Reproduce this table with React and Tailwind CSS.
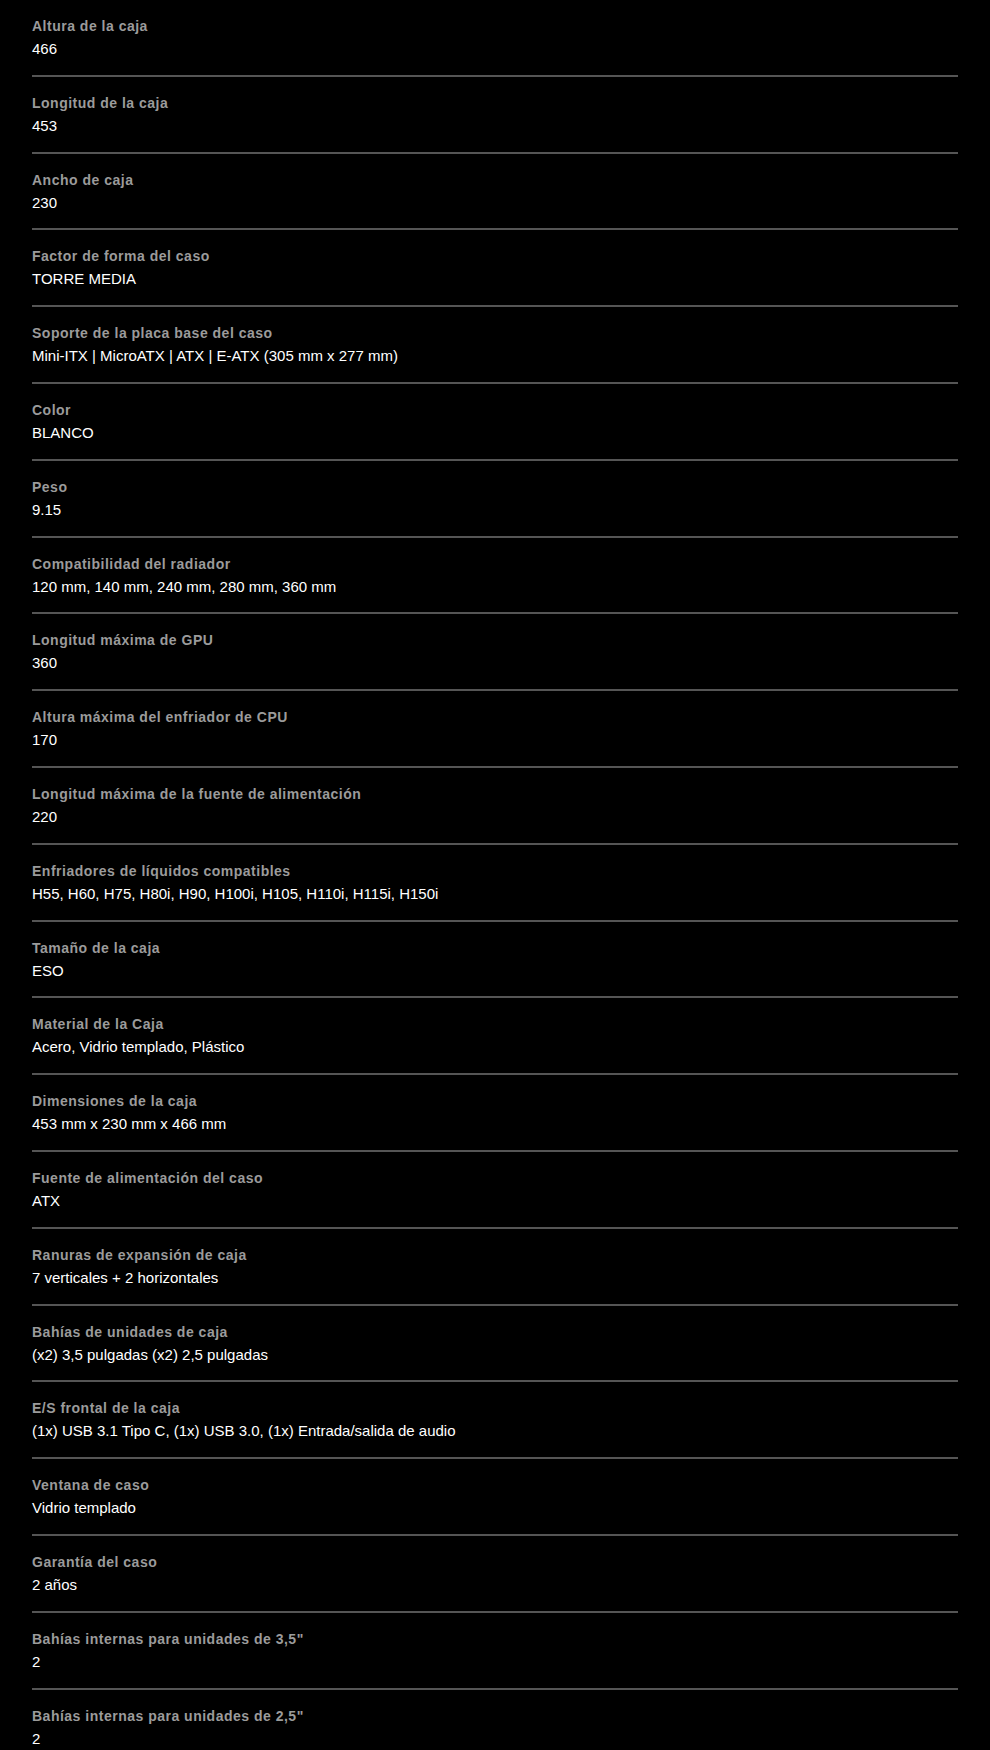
import React from 'react';

const specs = [
  ['Altura de la caja', '466'],
  ['Longitud de la caja', '453'],
  ['Ancho de caja', '230'],
  ['Factor de forma del caso', 'TORRE MEDIA'],
  ['Soporte de la placa base del caso', 'Mini-ITX | MicroATX | ATX | E-ATX (305 mm x 277 mm)'],
  ['Color', 'BLANCO'],
  ['Peso', '9.15'],
  ['Compatibilidad del radiador', '120 mm, 140 mm, 240 mm, 280 mm, 360 mm'],
  ['Longitud máxima de GPU', '360'],
  ['Altura máxima del enfriador de CPU', '170'],
  ['Longitud máxima de la fuente de alimentación', '220'],
  ['Enfriadores de líquidos compatibles', 'H55, H60, H75, H80i, H90, H100i, H105, H110i, H115i, H150i'],
  ['Tamaño de la caja', 'ESO'],
  ['Material de la Caja', 'Acero, Vidrio templado, Plástico'],
  ['Dimensiones de la caja', '453 mm x 230 mm x 466 mm'],
  ['Fuente de alimentación del caso', 'ATX'],
  ['Ranuras de expansión de caja', '7 verticales + 2 horizontales'],
  ['Bahías de unidades de caja', '(x2) 3,5 pulgadas (x2) 2,5 pulgadas'],
  ['E/S frontal de la caja', '(1x) USB 3.1 Tipo C, (1x) USB 3.0, (1x) Entrada/salida de audio'],
  ['Ventana de caso', 'Vidrio templado'],
  ['Garantía del caso', '2 años'],
  ['Bahías internas para unidades de 3,5"', '2'],
  ['Bahías internas para unidades de 2,5"', '2'],
];

const App = () => {
  return (
    <div className="min-h-screen bg-black px-8 font-['Liberation_Sans',Arial,sans-serif]">
      {specs.map(([label, value], i) => (
        <div key={i} className="border-b-2 border-[#555555] pt-4 pb-[15.8px]">
          <div className="text-[14px] font-bold leading-[20px] tracking-[0.5px] text-[#9b9b9b]">
            {label}
          </div>
          <div className="mt-[3px] text-[15px] leading-[20px] text-white">{value}</div>
        </div>
      ))}
    </div>
  );
};

export default App;
